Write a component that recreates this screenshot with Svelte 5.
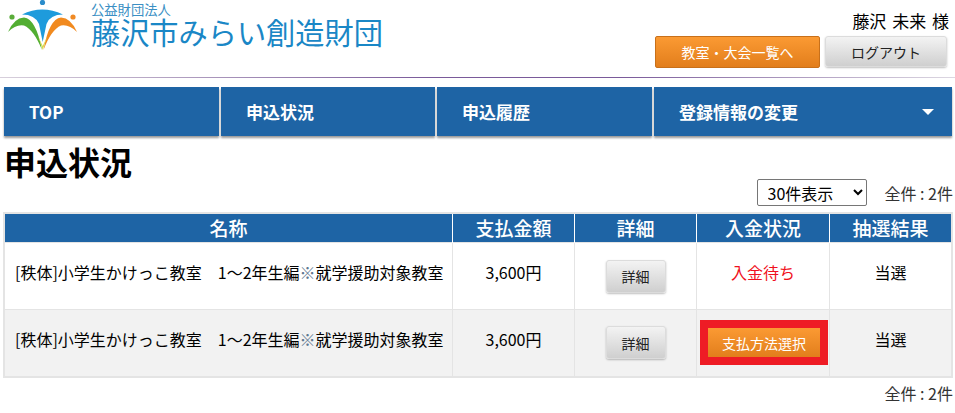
<script>
	const nav = [
		{ label: 'TOP', width: 215 },
		{ label: '申込状況', width: 214 },
		{ label: '申込履歴', width: 215 },
		{ label: '登録情報の変更', width: 298, arrow: true }
	];

	const rows = [
		{ name: '[秩体]小学生かけっこ教室　1～2年生編', note: '就学援助対象教室', price: '3,600円', status: '入金待ち', result: '当選' },
		{ name: '[秩体]小学生かけっこ教室　1～2年生編', note: '就学援助対象教室', price: '3,600円', pay: true, result: '当選' }
	];
</script>

<div class="page">
	<header class="site-header">
		<div class="logo">
			<svg class="mark" width="80" height="52" viewBox="0 0 80 52">
				<circle cx="42.5" cy="2.5" r="2.6" fill="#2a8ccb" />
				<circle cx="12" cy="17" r="2.6" fill="#5aac3a" />
				<circle cx="73" cy="17" r="2.6" fill="#f08a24" />
				<path d="M22 14.5 Q42 4.5 63 14.5 Q50 14.5 46.5 24 L42.7 42 L39 24 Q35 14.5 22 14.5 Z" fill="#1e9bdc" />
				<path d="M8 32 Q14 18 24 17.5 Q36 19 42 50 Q34 30 24 25.5 Q16 24 8 32 Z" fill="#52ae32" />
				<path d="M77 32 Q71 18 61 17.5 Q49 19 43.5 50 Q51 30 61 25.5 Q69 24 77 32 Z" fill="#f18a1f" />
				<path d="M38 36 Q40.5 43 42.7 50 Q45 43 47.5 36 L42.7 46 Z" fill="#d9d94a" />
			</svg>
			<div class="logo-text">
				<span class="org-type">公益財団法人</span>
				<span class="org-name">藤沢市みらい創造財団</span>
			</div>
		</div>
		<div class="user-area">
			<div class="user-name">藤沢 未来 様</div>
			<div class="user-buttons">
				<button class="btn-orange list-btn">教室・大会一覧へ</button>
				<button class="btn-gray logout-btn">ログアウト</button>
			</div>
		</div>
	</header>

	<nav class="main-nav">
		{#each nav as item}
			<div class="nav-item" style="width: {item.width}px">
				<span>{item.label}</span>
				{#if item.arrow}<i class="arrow"></i>{/if}
			</div>
		{/each}
	</nav>

	<h1>申込状況</h1>

	<div class="list-tools">
		<select class="per-page">
			<option>30件表示</option>
		</select>
		<span class="count">全件 : 2件</span>
	</div>

	<table>
		<thead>
			<tr>
				<th class="c-name">名称</th>
				<th class="c-price">支払金額</th>
				<th class="c-detail">詳細</th>
				<th class="c-status">入金状況</th>
				<th class="c-result">抽選結果</th>
			</tr>
		</thead>
		<tbody>
			{#each rows as row}
				<tr>
					<td class="name text">{row.name}<span class="mark-note">※</span>{row.note}</td>
					<td class="text">{row.price}</td>
					<td><button class="btn-gray detail-btn">詳細</button></td>
					{#if row.pay}
						<td><button class="btn-orange pay-btn">支払方法選択</button></td>
					{:else}
						<td class="text waiting">{row.status}</td>
					{/if}
					<td class="text">{row.result}</td>
				</tr>
			{/each}
		</tbody>
	</table>

	<div class="count bottom-count">全件 : 2件</div>
</div>

<style>
	:global(body) {
		margin: 0;
		background: #fff;
		overflow: hidden;
	}

	.page {
		width: 955px;
		height: 413px;
		overflow: hidden;
		color: #000;
		font-family: "Noto Sans CJK JP", "Noto Sans", sans-serif;
	}

	.site-header {
		height: 77px;
		display: flex;
		justify-content: space-between;
		border-bottom: 1px solid;
		border-image: linear-gradient(90deg, #d8d0dc, #7a5a9a 45%, #7a5a9a 65%, #ddd8e2) 1;
	}

	.logo {
		display: flex;
	}

	.mark {
		display: block;
		margin-right: 11px;
	}

	.logo-text {
		display: flex;
		flex-direction: column;
		padding-top: 4px;
		color: #1a87c6;
	}

	.org-type {
		font-size: 13.3px;
		line-height: 12px;
		color: #3a8fc4;
	}

	.org-name {
		font-size: 29.2px;
		line-height: 30px;
		white-space: nowrap;
	}

	.user-area {
		display: flex;
		flex-direction: column;
		align-items: flex-end;
		padding: 10px 6px 0 0;
	}

	.user-name {
		font-size: 17px;
		line-height: 21px;
		word-spacing: 2px;
		margin-bottom: 5px;
	}

	.user-buttons {
		display: flex;
		gap: 5px;
		margin-right: 2px;
	}

	button {
		font-family: inherit;
		padding: 0;
		cursor: pointer;
	}

	.btn-orange {
		color: #fff;
		background: linear-gradient(#fb9a33, #e27e1c);
		border: 1px solid #c8701a;
		border-radius: 2px;
	}

	.btn-gray {
		color: #222;
		background: linear-gradient(#f3f3f3, #cfcfcf);
		border: 1px solid #dcdcdc;
		border-radius: 3px;
		box-shadow: 0 1px 2px rgba(0, 0, 0, 0.25);
	}

	.list-btn {
		width: 165px;
		height: 32px;
		font-size: 14px;
	}

	.logout-btn {
		width: 122px;
		height: 31px;
		font-size: 14px;
	}

	.main-nav {
		display: flex;
		gap: 2px;
		margin: 9px 0 0 4px;
	}

	.nav-item {
		height: 49px;
		box-sizing: border-box;
		display: flex;
		align-items: center;
		justify-content: space-between;
		padding: 0 18px 0 25px;
		color: #fff;
		background: #1e64a5;
		font-size: 17px;
		font-weight: 700;
		box-shadow: 0 2px 2px rgba(0, 0, 0, 0.4);
	}

	.arrow {
		width: 0;
		height: 0;
		border-left: 6px solid transparent;
		border-right: 6px solid transparent;
		border-top: 6px solid #fff;
	}

	h1 {
		margin: 3px 0 0 4px;
		font-size: 32px;
		line-height: 44px;
		font-weight: 700;
	}

	.list-tools {
		display: flex;
		justify-content: flex-end;
		align-items: center;
		gap: 18px;
		height: 27px;
		margin-top: -4px;
		padding-right: 2px;
	}

	.per-page {
		width: 110px;
		height: 27px;
		font-family: inherit;
		font-size: 16px;
		padding-left: 6px;
		background: #fff;
		border: 1px solid #767676;
		border-radius: 2px;
		color: #000;
	}

	.count {
		font-size: 16px;
		color: #333;
	}

	table {
		margin: 6px 0 0 3px;
		width: 950px;
		table-layout: fixed;
		border-collapse: collapse;
		border: 2px solid #e4e4e4;
	}

	th {
		height: 28px;
		padding: 0;
		background: #1e64a5;
		color: #fff;
		font-size: 19px;
		font-weight: 500;
		border-left: 1px solid #fff;
		line-height: 28px;
	}

	th:first-child {
		border-left: 0;
	}

	.c-name {
		width: 447px;
	}

	.c-price {
		width: 121px;
	}

	.c-detail {
		width: 121px;
	}

	.c-status {
		width: 132px;
	}

	td {
		height: 67px;
		box-sizing: border-box;
		padding: 0;
		text-align: center;
		font-size: 16px;
		border-left: 1px solid #e4e4e4;
		border-top: 1px solid #e4e4e4;
	}

	td:first-child {
		border-left: 0;
	}

	td.text {
		padding-bottom: 8px;
	}

	tbody tr:nth-child(2) td {
		background: #f2f2f2;
	}

	td.name {
		text-align: left;
		padding-left: 10px;
		white-space: nowrap;
	}

	.mark-note {
		color: #5f7890;
	}

	.waiting {
		color: #f01020;
	}

	.detail-btn {
		display: block;
		margin: 0 auto;
		width: 60px;
		height: 33px;
		font-size: 14px;
	}

	.pay-btn {
		display: block;
		margin: 0 1px 0 auto;
		width: 128px;
		height: 45px;
		box-sizing: border-box;
		font-size: 14px;
		border: 8px solid #ee1c25;
		border-radius: 0;
	}

	.bottom-count {
		text-align: right;
		padding: 5px 2px 0 0;
		line-height: 21px;
	}
</style>
